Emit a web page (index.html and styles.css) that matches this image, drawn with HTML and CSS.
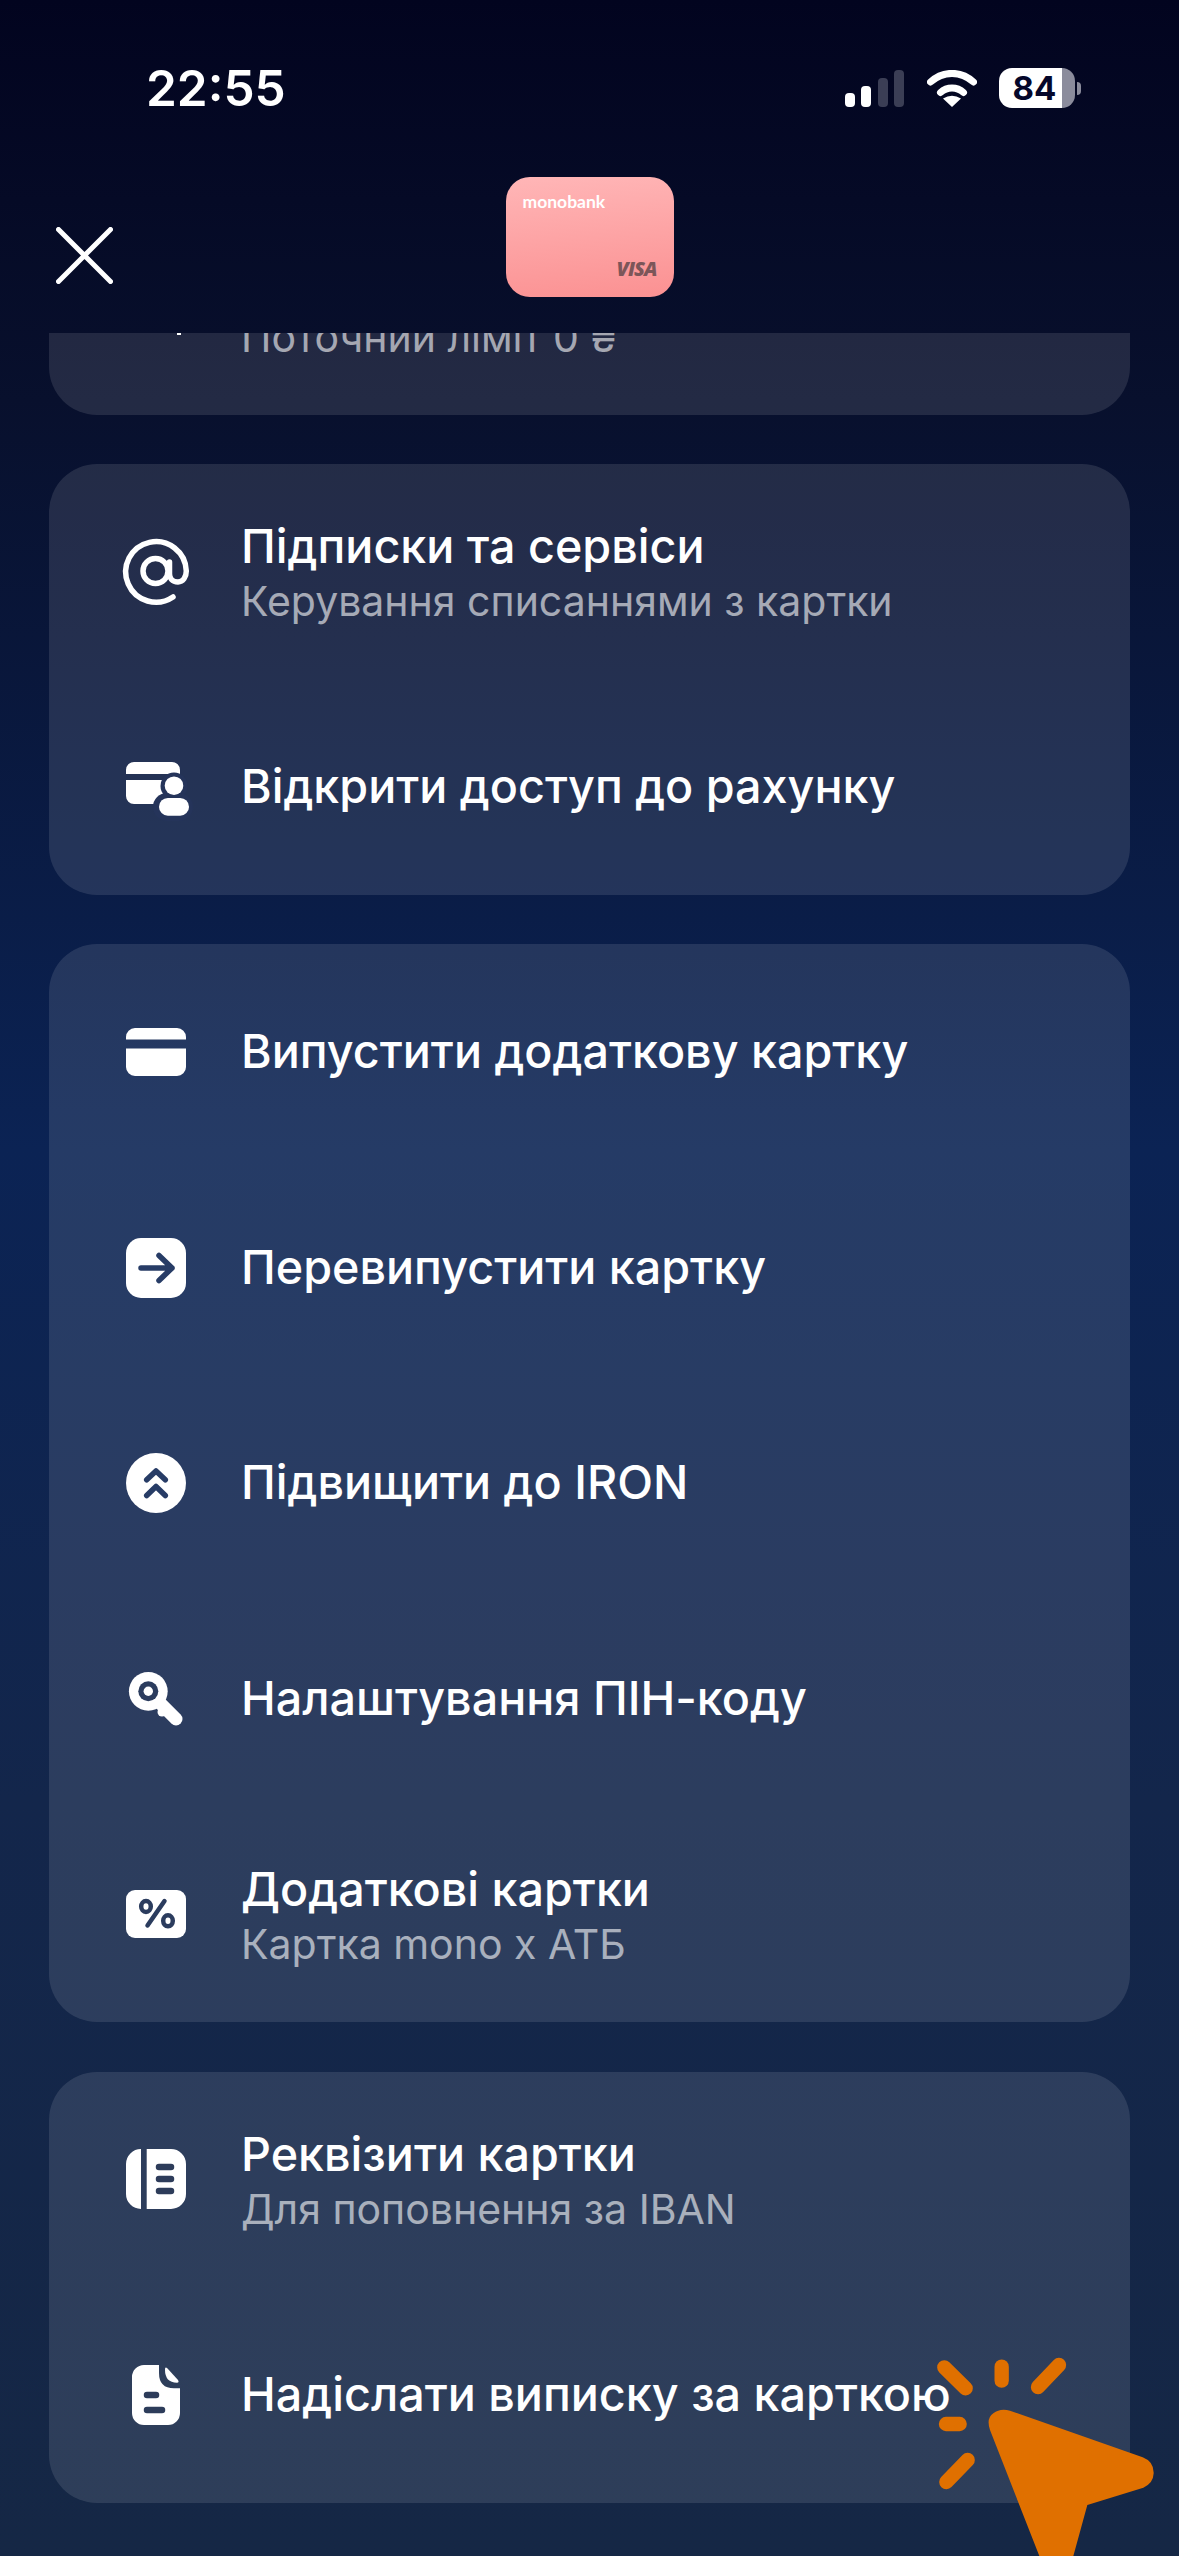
FILE: index.html
```html
<!DOCTYPE html>
<html lang="uk">
<head>
  <meta charset="UTF-8" />
  <title>Картка – monobank</title>
  <link rel="stylesheet" href="styles.css">
</head>
<body>

  <header class="top">
    <div class="status">
      <div class="time">22:55</div>
      <div class="status-icons">
        <div class="signal">
          <span class="bar bar1"></span>
          <span class="bar bar2"></span>
          <span class="bar bar3 off"></span>
          <span class="bar bar4 off"></span>
        </div>
        <svg class="wifi" viewBox="0 0 50 37" fill="none" stroke="#fff" stroke-width="7" stroke-linecap="round">
          <path d="M3.5 12C16 .5 34 .5 46.5 12" />
          <path d="M13.5 22.5C20 16.5 30 16.5 36.5 22.5" />
          <path d="M25 37L16 28.5Q25 23 34 28.5Z" fill="#fff" stroke="none" />
        </svg>
        <div class="battery"><span class="battery-num">84</span></div>
        <span class="battery-tip"></span>
      </div>
    </div>

    <div class="nav">
      <svg class="close" viewBox="0 0 57 57" fill="none" stroke="#fff" stroke-width="5" stroke-linecap="round">
        <path d="M2.5 2.5L54.5 54.5M54.5 2.5L2.5 54.5" />
      </svg>
      <div class="mini-card">
        <div class="mini-name">monobank</div>
        <div class="mini-visa">VISA</div>
      </div>
    </div>
  </header>

  <main class="sheet">

    <!-- scrolled away under the header -->
    <section class="card card-cut">
      <span class="cut-dot"></span>
      <div class="cut-text">Поточний ліміт 0 ₴</div>
    </section>

    <section class="card">
      <div class="row">
        <svg class="icon" viewBox="0 0 60 60" fill="none" stroke="#fff" stroke-width="5.5" stroke-linecap="round">
          <circle cx="29.5" cy="30" r="12.5" />
          <path d="M47 56A30.3 30.3 0 1 1 60.3 30C60.3 36 57 41 52 41C46 41 43.5 37 43.5 33V21" />
        </svg>
        <div class="row-text">
          <div class="title">Підписки та сервіси</div>
          <div class="sub">Керування списаннями з картки</div>
        </div>
      </div>
      <div class="row">
        <svg class="icon" viewBox="0 0 60 60">
          <path class="ink" d="M0 17V13a8 8 0 0 1 8-8H46a8 8 0 0 1 8 8V17ZM0 23H54V47H8a8 8 0 0 1-8-8Z" />
          <circle class="cut-a" cx="48" cy="29" r="13.5" />
          <rect class="cut-a" x="27" y="36" width="40" height="28" rx="14" />
          <circle class="ink" cx="48" cy="28.7" r="9.3" />
          <rect class="ink" x="33" y="41" width="30" height="17.7" rx="8.8" />
        </svg>
        <div class="row-text">
          <div class="title">Відкрити доступ до рахунку</div>
        </div>
      </div>
    </section>

    <section class="card">
      <div class="row">
        <svg class="icon" viewBox="0 0 60 60">
          <path class="ink" d="M0 17.6V15a9 9 0 0 1 9-9H51a9 9 0 0 1 9 9V17.6ZM0 26.5H60V45a9 9 0 0 1-9 9H9a9 9 0 0 1-9-9Z" />
        </svg>
        <div class="row-text">
          <div class="title">Випустити додаткову картку</div>
        </div>
      </div>
      <div class="row">
        <svg class="icon" viewBox="0 0 60 60">
          <rect class="ink" width="60" height="60" rx="15" />
          <path class="line-b" d="M15 30H46M33 17.5L46 30L33 42.5" />
        </svg>
        <div class="row-text">
          <div class="title">Перевипустити картку</div>
        </div>
      </div>
      <div class="row">
        <svg class="icon" viewBox="0 0 60 60">
          <circle class="ink" cx="30" cy="30" r="30" />
          <path class="line-b" d="M20.7 26.8L30 18L39.3 26.8M20.7 42.5L30 33.5L39.3 42.5" />
        </svg>
        <div class="row-text">
          <div class="title">Підвищити до IRON</div>
        </div>
      </div>
      <div class="row">
        <svg class="icon" viewBox="0 0 60 60">
          <path class="line-w" d="M28 28L50 50" />
          <circle class="ink" cx="36" cy="43" r="4.5" />
          <circle class="ink" cx="22.3" cy="22.3" r="19.4" />
          <circle class="cut-c" cx="22.3" cy="22.3" r="10" />
          <circle class="ink" cx="22.3" cy="22.3" r="4.7" />
        </svg>
        <div class="row-text">
          <div class="title">Налаштування ПІН-коду</div>
        </div>
      </div>
      <div class="row">
        <svg class="icon" viewBox="0 0 60 60">
          <rect class="ink" y="6" width="60" height="48" rx="9" />
          <path class="line-c" d="M21.5 41.5L38.5 17" />
          <ellipse class="ring" cx="20" cy="22.5" rx="4.8" ry="5.5" />
          <ellipse class="ring" cx="42" cy="36.8" rx="4.8" ry="5.5" />
        </svg>
        <div class="row-text">
          <div class="title">Додаткові картки</div>
          <div class="sub">Картка mono х АТБ</div>
        </div>
      </div>
    </section>

    <section class="card">
      <div class="row">
        <svg class="icon" viewBox="0 0 60 60">
          <path class="ink" d="M15 0V60A15 15 0 0 1 0 45V15A15 15 0 0 1 15 0ZM20.7 0H45A15 15 0 0 1 60 15V45A15 15 0 0 1 45 60H20.7Z" />
          <path class="line-d" d="M33 18H45M33 30H45M33 42H45" />
        </svg>
        <div class="row-text">
          <div class="title">Реквізити картки</div>
          <div class="sub">Для поповнення за IBAN</div>
        </div>
      </div>
      <div class="row">
        <svg class="icon" viewBox="0 0 60 60">
          <path class="ink" d="M6 12A12 12 0 0 1 18 0H33V8Q33 23.3 48 23.3H54V48A12 12 0 0 1 42 60H18A12 12 0 0 1 6 48Z" />
          <path class="ink" d="M39 4.5Q39 1 41.5 3.5L52 15Q53.5 17.7 51 17.7Q39 17.7 39 4.5Z" />
          <path class="line-d" d="M21 30H30M21 45H36" />
        </svg>
        <div class="row-text">
          <div class="title">Надіслати виписку за карткою</div>
        </div>
      </div>
    </section>

  </main>

  <!-- tap hint drawn over the last row -->
  <svg class="pointer" viewBox="0 0 837 708">
    <g fill="none" stroke="#e07000" stroke-width="43" stroke-linecap="round">
      <path d="M133 142L197 205" />
      <path d="M305 140V182" />
      <path d="M477 135L414 201" />
      <path d="M138 312H179" />
      <path d="M203 420L139 486" />
    </g>
    <path fill="#e07000" d="M330 272L728 412Q762 425 761 460Q760 490 730 503L562 555L520 708H418L270 330Q258 295 280 280Q300 264 330 272Z" />
  </svg>

</body>
</html>
```

FILE: styles.css
```css
body {
  position: relative;
  width: 1179px;
  height: 2556px;
  margin: 0;
  overflow: hidden;
  font-family: Inter, "Noto Sans", sans-serif;
  color: #fff;
  background: linear-gradient(180deg, #02041f 0, #08102d 400px, #0b2354 1150px, #13264b 1800px, #152745 2556px);
}

.top {
  height: 333px;
}

.status {
  display: flex;
  justify-content: space-between;
  align-items: center;
  height: 88px;
  padding: 0 98px 0 146px;
  box-sizing: border-box;
  transform: translateY(44px);
}

.time {
  font-size: 49.5px;
  font-weight: 600;
}

.status-icons {
  display: flex;
  align-items: center;
}

.signal {
  display: flex;
  align-items: flex-end;
  gap: 6.5px;
  height: 37px;
  margin-right: 23px;
}

.bar {
  width: 10px;
  border-radius: 4px;
  background-color: #fff;
}

.bar.off {
  background-color: #3b3e55;
}

.bar1 { height: 14px; }
.bar2 { height: 21px; }
.bar3 { height: 29px; }
.bar4 { height: 37px; }

.wifi {
  width: 50px;
  height: 37px;
  margin-right: 22px;
}

.battery {
  display: flex;
  align-items: center;
  width: 76px;
  height: 40px;
  border-radius: 13px;
  background: linear-gradient(90deg, #fff 63px, #8b8c9c 63px);
}

.battery-num {
  width: 71px;
  font-size: 33px;
  font-weight: 700;
  text-align: center;
  color: #05072a;
}

.battery-tip {
  width: 4px;
  height: 13px;
  margin-left: 2px;
  border-radius: 0 8px 8px 0;
  background-color: #8b8c9c;
}

.nav {
  display: flex;
  justify-content: center;
  position: relative;
  padding-top: 89px;
}

/* header buttons sit over the centred card */
.close {
  position: absolute;
  left: 56px;
  top: 139px;
  width: 57px;
  height: 57px;
}

.mini-card {
  display: flex;
  flex-direction: column;
  justify-content: space-between;
  box-sizing: border-box;
  width: 168px;
  height: 120px;
  padding: 14px 17px 18px;
  border-radius: 24px;
  background: linear-gradient(175deg, #ffb6b7, #fb9192);
}

.mini-name {
  font-family: Lato, sans-serif;
  font-size: 17.5px;
  font-weight: 700;
}

.mini-visa {
  align-self: flex-end;
  font-family: "Open Sans", sans-serif;
  font-size: 20px;
  font-weight: 800;
  font-style: italic;
  line-height: 20px;
  letter-spacing: -1px;
  color: #7c5659;
}

.sheet {
  display: flex;
  flex-direction: column;
  gap: 49.5px;
  padding: 0 49px;
}

.card {
  border-radius: 48px;
  background-color: rgba(255, 255, 255, 0.11);
}

.card-cut {
  position: relative;
  height: 82px;
  margin-bottom: -1px;
  border-radius: 0 0 48px 48px;
  overflow: hidden;
}

.cut-dot {
  position: absolute;
  left: 128px;
  top: 0;
  width: 4px;
  height: 2px;
  background-color: #fff;
}

.cut-text {
  margin: -20px 0 0 192px;
  font-size: 41px;
  line-height: 48px;
  color: rgba(255, 255, 255, 0.6);
}

.row {
  display: flex;
  align-items: center;
  gap: 55px;
  height: 215.6px;
  padding-left: 77px;
}

.icon {
  flex: none;
  width: 60px;
  height: 60px;
  overflow: visible;
}

.ink { fill: #fff; }
.cut-a { fill: #25345a; }
.cut-c { fill: #2b3c5e; }

.line-b, .line-c, .line-d, .line-w, .ring {
  fill: none;
  stroke-linecap: round;
  stroke-linejoin: round;
}

.line-b { stroke: #273c66; stroke-width: 5.5; }
.line-c { stroke: #2b3c5e; stroke-width: 4.5; }
.ring { stroke: #2b3c5e; stroke-width: 4.5; }
.line-d { stroke: #2d3c5a; stroke-width: 6.5; }
.line-w { stroke: #fff; stroke-width: 13; }

.row-text {
  display: flex;
  flex-direction: column;
  gap: 3px;
  padding-bottom: 2px;
}

.title {
  font-size: 46.7px;
  font-weight: 500;
  line-height: 54px;
  white-space: nowrap;
}

/* two line rows sit a little lower */
.title:not(:last-child) {
  margin-top: 5px;
}

.sub {
  font-size: 41px;
  line-height: 50px;
  white-space: nowrap;
  color: rgba(255, 255, 255, 0.6);
}

.pointer {
  position: absolute;
  left: 900px;
  top: 2320px;
  width: 279px;
  height: 236px;
}
```
